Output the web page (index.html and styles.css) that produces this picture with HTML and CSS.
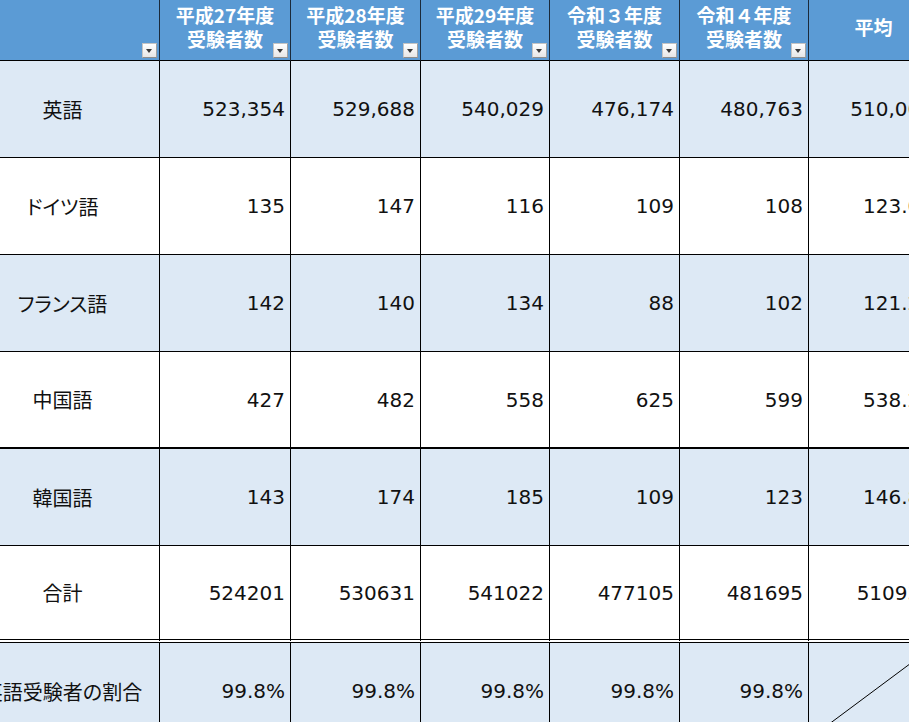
FILE: index.html
```html
<!DOCTYPE html>
<html lang="ja">
<head>
<meta charset="utf-8">
<title>受験者数</title>
<link rel="stylesheet" href="styles.css">
</head>
<body>
<div class="sheet">
  <div class="row head">
    <div class="cell"><span class="filter"></span></div>
    <div class="cell"><span class="htext">平成27年度<br>受験者数</span><span class="filter"></span></div>
    <div class="cell"><span class="htext">平成28年度<br>受験者数</span><span class="filter"></span></div>
    <div class="cell"><span class="htext">平成29年度<br>受験者数</span><span class="filter"></span></div>
    <div class="cell"><span class="htext">令和３年度<br>受験者数</span><span class="filter"></span></div>
    <div class="cell"><span class="htext">令和４年度<br>受験者数</span><span class="filter"></span></div>
    <div class="cell"><span class="htext">平均</span><span class="filter"></span></div>
  </div>
  <div class="row alt">
    <div class="cell label">英語</div>
    <div class="cell num">523,354</div>
    <div class="cell num">529,688</div>
    <div class="cell num">540,029</div>
    <div class="cell num">476,174</div>
    <div class="cell num">480,763</div>
    <div class="cell num">510,002</div>
  </div>
  <div class="row">
    <div class="cell label">ドイツ語</div>
    <div class="cell num">135</div>
    <div class="cell num">147</div>
    <div class="cell num">116</div>
    <div class="cell num">109</div>
    <div class="cell num">108</div>
    <div class="cell num">123.00</div>
  </div>
  <div class="row alt">
    <div class="cell label">フランス語</div>
    <div class="cell num">142</div>
    <div class="cell num">140</div>
    <div class="cell num">134</div>
    <div class="cell num">88</div>
    <div class="cell num">102</div>
    <div class="cell num">121.20</div>
  </div>
  <div class="row thick">
    <div class="cell label">中国語</div>
    <div class="cell num">427</div>
    <div class="cell num">482</div>
    <div class="cell num">558</div>
    <div class="cell num">625</div>
    <div class="cell num">599</div>
    <div class="cell num">538.20</div>
  </div>
  <div class="row alt">
    <div class="cell label">韓国語</div>
    <div class="cell num">143</div>
    <div class="cell num">174</div>
    <div class="cell num">185</div>
    <div class="cell num">109</div>
    <div class="cell num">123</div>
    <div class="cell num">146.80</div>
  </div>
  <div class="row dbl">
    <div class="cell label">合計</div>
    <div class="cell num">524201</div>
    <div class="cell num">530631</div>
    <div class="cell num">541022</div>
    <div class="cell num">477105</div>
    <div class="cell num">481695</div>
    <div class="cell num">510931</div>
  </div>
  <div class="row alt">
    <div class="cell label">英語受験者の割合</div>
    <div class="cell num">99.8%</div>
    <div class="cell num">99.8%</div>
    <div class="cell num">99.8%</div>
    <div class="cell num">99.8%</div>
    <div class="cell num">99.8%</div>
    <div class="cell diag">
      <svg viewBox="0 0 129 96" preserveAspectRatio="none"><line x1="0" y1="96" x2="129" y2="0" stroke="#000" stroke-width="1" vector-effect="non-scaling-stroke"/></svg>
    </div>
  </div>
</div>
</body>
</html>
```

FILE: styles.css
```css
html, body {
  margin: 0;
  padding: 0;
  background: #ffffff;
  overflow: hidden;
}

body {
  width: 909px;
  height: 722px;
}

.sheet {
  display: grid;
  grid-template-columns: 194px 131px 130px 129px 130px 129px 130px;
  grid-template-rows: 61px repeat(7, 97px);
  margin-left: -34px;
  width: 973px;
  font-family: "DejaVu Sans", "Noto Sans CJK JP", sans-serif;
  font-size: 20px;
  color: #111111;
}

.row {
  display: contents;
}

.cell {
  box-sizing: border-box;
  border-right: 1px solid #000000;
  border-bottom: 1px solid #000000;
  display: flex;
  align-items: center;
  position: relative;
  background: #ffffff;
}

.row.alt .cell {
  background: #dde9f5;
}

.row.thick .cell {
  border-bottom: 2px solid #000000;
}

.row.dbl .cell {
  border-bottom: 4px double #000000;
}

.row.head .cell {
  background: #5b9bd5;
  border-right-color: #1b2a3a;
  justify-content: center;
  padding-bottom: 6px;
  color: #ffffff;
  font-family: "Noto Sans CJK JP", sans-serif;
  font-weight: 700;
  font-size: 19px;
  line-height: 24px;
  text-align: center;
}

.htext {
  display: block;
}

.filter {
  position: absolute;
  right: 2px;
  bottom: 2px;
  width: 15px;
  height: 15px;
  box-sizing: border-box;
  background: linear-gradient(#ffffff, #e6e6e6);
  border: 1px solid #c4c4c4;
  border-bottom-color: #8d8d8d;
  border-right-color: #a0a0a0;
}

.filter::after {
  content: "";
  position: absolute;
  left: 3px;
  top: 5px;
  border-left: 3.5px solid transparent;
  border-right: 3.5px solid transparent;
  border-top: 4px solid #3a3a3a;
}

.label {
  justify-content: center;
  font-family: "Noto Sans CJK JP", sans-serif;
  font-feature-settings: "palt";
  white-space: nowrap;
}

.num {
  justify-content: flex-end;
  padding-right: 5px;
  white-space: nowrap;
}

.diag {
  padding: 0;
  align-items: stretch;
}

.diag svg {
  display: block;
  width: 100%;
  height: 100%;
}
```
